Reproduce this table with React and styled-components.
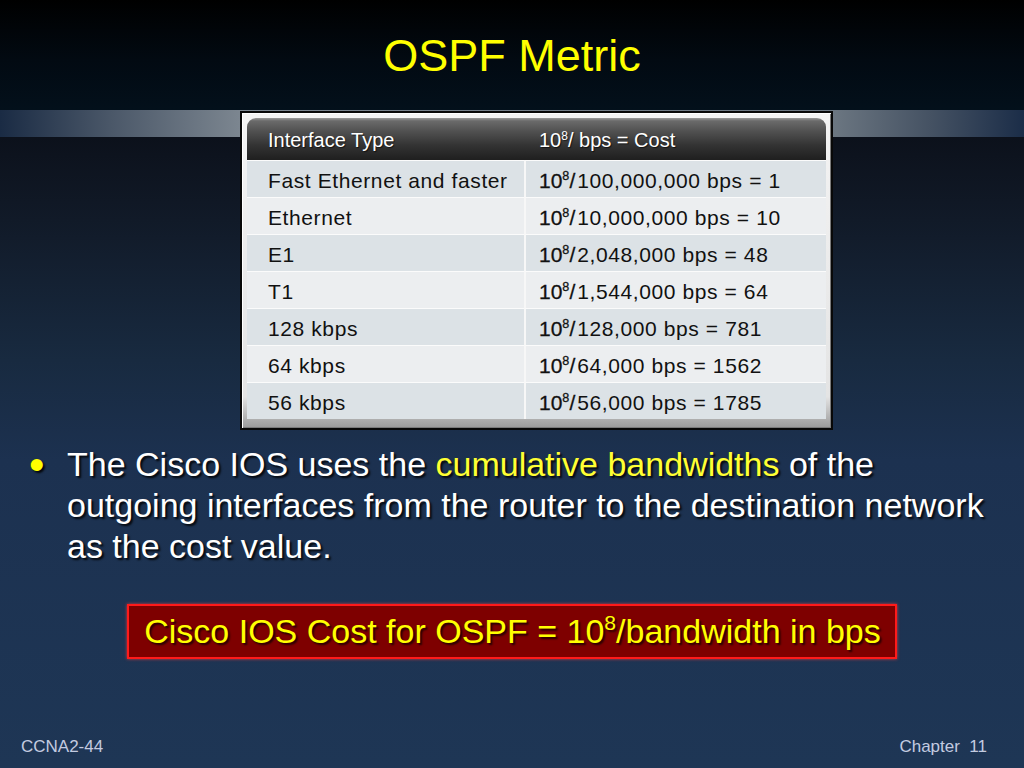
import React from "react";
import styled, { createGlobalStyle } from "styled-components";

const Global = createGlobalStyle`
  html, body { margin: 0; padding: 0; }
  body {
    width: 1024px;
    height: 768px;
    overflow: hidden;
    font-family: "Liberation Sans", Arial, sans-serif;
    background: #0c111b;
  }
`;

const Page = styled.div`
  width: 1024px;
  height: 768px;
  display: flex;
  flex-direction: column;
  background: linear-gradient(
    180deg,
    #000000 0px,
    #020a12 60px,
    #03101b 110px,
    #0c111b 137px,
    #111a28 220px,
    #182a40 360px,
    #1c3150 460px,
    #1e3655 768px
  );
`;

const TitleBar = styled.header`
  height: 110px;
  display: flex;
  align-items: center;
  justify-content: center;
`;

const Title = styled.h1`
  margin: 0;
  font-weight: normal;
  font-size: 45px;
  line-height: 52px;
  color: #ffff00;
  padding-top: 2px;
`;

const TableSection = styled.section`
  display: flex;
  padding: 1px 0 0 240px;
  background-image: linear-gradient(
    90deg,
    #1a2b44 0px,
    #4a5768 110px,
    #7c8690 240px,
    #6b7681 834px,
    #455263 930px,
    #1b2d48 1024px
  );
  background-repeat: no-repeat;
  background-size: 100% 27px;
`;

const Frame = styled.div`
  width: 579px;
  border: 2px solid #080808;
  padding: 5px 5px 9px;
  background: linear-gradient(
    180deg,
    #f4f4f4 0px,
    #e4e4e4 90%,
    #9a9a9a 100%
  );
  box-shadow: inset 1px 1px 0 #ffffff, inset -1px -1px 0 #7a7a7a;
`;

const Grid = styled.div`
  display: grid;
  grid-template-columns: 277px 1fr;
`;

const HeadCell = styled.div`
  height: 42px;
  display: flex;
  align-items: center;
  padding-left: ${(p) => (p.$first ? "21px" : "15px")};
  padding-top: 2px;
  box-sizing: border-box;
  color: #ffffff;
  font-size: 20px;
  text-shadow: 1px 1px 1px rgba(0, 0, 0, 0.6);
  border-radius: ${(p) => (p.$first ? "9px 0 0 0" : "0 9px 0 0")};
  background: linear-gradient(
    180deg,
    #9a9a9a 0px,
    #6a6a6a 3px,
    #525252 30%,
    #333333 65%,
    #1f1f1f 100%
  );
`;

const Cell = styled.div`
  height: 37px;
  box-sizing: border-box;
  display: flex;
  align-items: center;
  padding-top: 3px;
  padding-left: ${(p) => (p.$first ? "21px" : "13px")};
  border-top: 1px solid #fbfbfb;
  border-left: ${(p) => (p.$first ? "none" : "2px solid #f7f7f7")};
  background: ${(p) => (p.$alt ? "#eceef0" : "#dce2e6")};
  color: #111111;
  font-size: 21px;
  letter-spacing: 0.6px;
  white-space: nowrap;
`;

const Pow = styled.span`
  letter-spacing: 0;
  -webkit-text-stroke: 0.3px #111;
  margin-right: 2px;
`;

const Sup = styled.sup`
  font-size: 0.6em;
  vertical-align: 0.62em;
  line-height: 0;
`;

const Bullets = styled.ul`
  list-style: none;
  margin: 14px 0 0 0;
  padding: 0 20px 0 29px;
`;

const Item = styled.li`
  display: flex;
  color: #ffffff;
  font-size: 34px;
  line-height: 41px;
  text-shadow: 2px 2px 2px rgba(0, 0, 0, 0.85);
`;

const Dot = styled.span`
  flex: 0 0 38px;
  color: #ffff00;
  font-size: 44px;
  line-height: 41px;
`;

const BulletText = styled.p`
  margin: 0;
`;

const Highlight = styled.span`
  color: #ffff33;
`;

const FormulaRow = styled.div`
  display: flex;
  justify-content: center;
  margin-top: 37px;
`;

const Formula = styled.div`
  border: 2px solid #ff1a1a;
  box-shadow: 0 0 3px rgba(255, 60, 60, 0.8);
  background: #7e0000;
  color: #ffff00;
  font-size: 34px;
  line-height: 51px;
  padding: 0 14px 0 15px;
  text-shadow: 2px 2px 2px rgba(0, 0, 0, 0.7);
`;

const FormulaSup = styled.sup`
  font-size: 0.62em;
  vertical-align: 0.6em;
  line-height: 0;
`;

const Footer = styled.footer`
  margin-top: auto;
  display: flex;
  justify-content: space-between;
  padding: 0 37px 11px 21px;
  color: #c3cbe0;
  font-size: 17px;
  line-height: 20px;
`;

const rows = [
  ["Fast Ethernet and faster", "100,000,000 bps = 1"],
  ["Ethernet", "10,000,000 bps = 10"],
  ["E1", "2,048,000 bps = 48"],
  ["T1", "1,544,000 bps = 64"],
  ["128 kbps", "128,000 bps = 781"],
  ["64 kbps", "64,000 bps = 1562"],
  ["56 kbps", "56,000 bps = 1785"],
];

export default function App() {
  return (
    <>
      <Global />
      <Page>
        <TitleBar>
          <Title>OSPF Metric</Title>
        </TitleBar>
        <TableSection>
          <Frame>
            <Grid>
              <HeadCell $first>Interface Type</HeadCell>
              <HeadCell>
                <span>
                  10<Sup>8</Sup>/&nbsp;bps = Cost
                </span>
              </HeadCell>
              {rows.map(([type, cost], i) => (
                <React.Fragment key={type}>
                  <Cell $first $alt={i % 2 === 1}>
                    {type}
                  </Cell>
                  <Cell $alt={i % 2 === 1}>
                    <Pow>
                      10<Sup>8</Sup>/
                    </Pow>
                    <span>{cost}</span>
                  </Cell>
                </React.Fragment>
              ))}
            </Grid>
          </Frame>
        </TableSection>
        <Bullets>
          <Item>
            <Dot>•</Dot>
            <BulletText>
              The Cisco IOS uses the <Highlight>cumulative bandwidths</Highlight>{" "}
              of the outgoing interfaces from the router to the destination
              network as the cost value.
            </BulletText>
          </Item>
        </Bullets>
        <FormulaRow>
          <Formula>
            Cisco IOS Cost for OSPF = 10<FormulaSup>8</FormulaSup>/bandwidth in bps
          </Formula>
        </FormulaRow>
        <Footer>
          <span>CCNA2-44</span>
          <span>Chapter&nbsp;&nbsp;11</span>
        </Footer>
      </Page>
    </>
  );
}
